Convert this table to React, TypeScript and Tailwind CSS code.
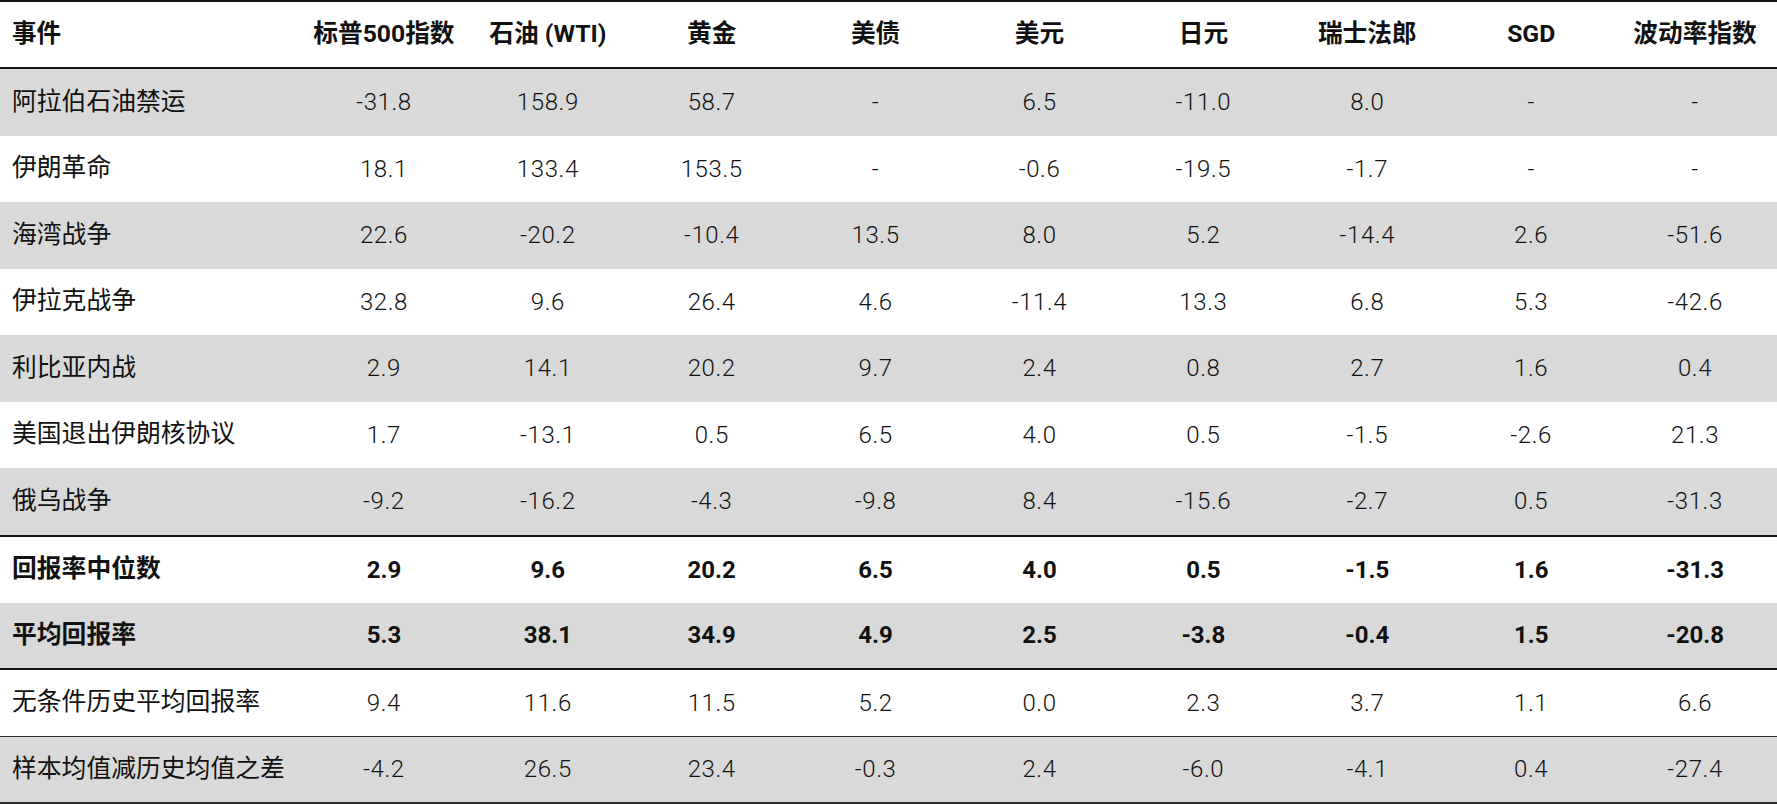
import React from "react";

const headers = ["事件", "标普500指数", "石油 (WTI)", "黄金", "美债", "美元", "日元", "瑞士法郎", "SGD", "波动率指数"];

type Row = {
  label: string;
  values: string[];
  gray: boolean;
  bold?: boolean;
  height: string;
  border?: string;
};

const rows: Row[] = [
  { label: "阿拉伯石油禁运", values: ["-31.8", "158.9", "58.7", "-", "6.5", "-11.0", "8.0", "-", "-"], gray: true, height: "h-[66.5px]" },
  { label: "伊朗革命", values: ["18.1", "133.4", "153.5", "-", "-0.6", "-19.5", "-1.7", "-", "-"], gray: false, height: "h-[66.5px]" },
  { label: "海湾战争", values: ["22.6", "-20.2", "-10.4", "13.5", "8.0", "5.2", "-14.4", "2.6", "-51.6"], gray: true, height: "h-[66.5px]" },
  { label: "伊拉克战争", values: ["32.8", "9.6", "26.4", "4.6", "-11.4", "13.3", "6.8", "5.3", "-42.6"], gray: false, height: "h-[66.5px]" },
  { label: "利比亚内战", values: ["2.9", "14.1", "20.2", "9.7", "2.4", "0.8", "2.7", "1.6", "0.4"], gray: true, height: "h-[66.5px]" },
  { label: "美国退出伊朗核协议", values: ["1.7", "-13.1", "0.5", "6.5", "4.0", "0.5", "-1.5", "-2.6", "21.3"], gray: false, height: "h-[66.5px]" },
  { label: "俄乌战争", values: ["-9.2", "-16.2", "-4.3", "-9.8", "8.4", "-15.6", "-2.7", "0.5", "-31.3"], gray: true, height: "h-[68.5px]", border: "border-b-2 border-[#141414]" },
  { label: "回报率中位数", values: ["2.9", "9.6", "20.2", "6.5", "4.0", "0.5", "-1.5", "1.6", "-31.3"], gray: false, bold: true, height: "h-[66px]" },
  { label: "平均回报率", values: ["5.3", "38.1", "34.9", "4.9", "2.5", "-3.8", "-0.4", "1.5", "-20.8"], gray: true, bold: true, height: "h-[67.5px]", border: "border-b-2 border-[#141414]" },
  { label: "无条件历史平均回报率", values: ["9.4", "11.6", "11.5", "5.2", "0.0", "2.3", "3.7", "1.1", "6.6"], gray: false, height: "h-[66.5px]", border: "border-b-[1.5px] border-[#2e2e2e]" },
  { label: "样本均值减历史均值之差", values: ["-4.2", "26.5", "23.4", "-0.3", "2.4", "-6.0", "-4.1", "0.4", "-27.4"], gray: true, height: "h-[67px]", border: "border-b-2 border-[#2e2e2e]" },
];

const grid = "grid grid-cols-[302px_repeat(9,minmax(0,1fr))] items-center";

export default function App() {
  return (
    <div className="w-[1777px] h-[804px] bg-white text-[#111] font-['Roboto','Noto_Sans_CJK_SC',sans-serif] text-[24px] leading-none">
      {/* Header */}
      <div className={`${grid} h-[69px] border-t-2 border-b-2 border-[#141414]`}>
        {headers.map((h, i) => (
          <div key={h} className={i === 0 ? "pl-[12px] font-bold text-[24.5px]" : "text-center font-bold text-[24.7px]"}>
            {h}
          </div>
        ))}
      </div>

      {/* Body */}
      {rows.map((r) => (
        <div
          key={r.label}
          className={`${grid} ${r.height} ${r.gray ? "bg-[#d9d9d9]" : "bg-white"} ${r.border ?? ""}`}
        >
          <div className={`pl-[12px] text-[24.8px] ${r.bold ? "font-bold" : "font-normal"}`}>{r.label}</div>
          {r.values.map((v, i) => (
            <div key={i} className={`text-center ${r.bold ? "font-bold" : "font-light tracking-[0.6px]"}`}>
              {v}
            </div>
          ))}
        </div>
      ))}
    </div>
  );
}
